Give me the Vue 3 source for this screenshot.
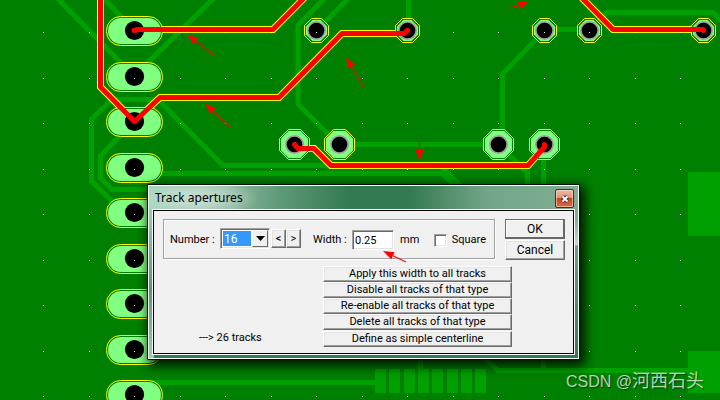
<script setup>
import { ref } from 'vue'

const aperture = ref('16')
const width = ref('0.25')
const square = ref(false)

const actions = [
  'Apply this width to all tracks',
  'Disable all tracks of that type',
  'Re-enable all tracks of that type',
  'Delete all tracks of that type',
  'Define as simple centerline',
]

const range = (n, start, step) => Array.from({ length: n }, (_, i) => Math.round(start + i * step))

const dots = range(15, 43, 45.5).flatMap((x) => range(9, 32, 45.5).map((y) => ({ x, y })))
const pills = range(9, 16, 45.5)
const fingers = [375, 389, 404, 418, 432, 447, 461, 475]

const octagon = (cx, cy, r) => {
  const k = Math.round(r * 0.42)
  return [[-k, -r], [k, -r], [r, -k], [r, k], [k, r], [-k, r], [-r, k], [-r, -k]]
    .map(([x, y]) => `${cx + x},${cy + y}`)
    .join(' ')
}
const pads = [
  ...[316.5, 407.5, 544.5, 589.5, 703.5].map((x) => ({ x, y: 30.5, r: 12 })),
  ...[294.5, 339.5, 498.5, 544.5].map((x) => ({ x, y: 144.5, r: 15 })),
]

const backTracks = [
  '57,-2 134,76',
  '103,-2 134,30',
  '214,-2 134,76',
  '300,165.5 223,165.5 158,99.5 112,99.5 91.5,119 91.5,181 116,205',
  '134,121 100.5,156 100.5,178 112,189.5 150,189.5',
  '300,165.5 440,165.5 465,190',
  '150,173.5 442,173.5 460,191',
  '325,-2 298,25 298,104 339,145',
  '349,-2 316,31',
  '408.5,-2 408.5,30',
  '339,144.5 498,144.5',
  '544,31 502.5,74 502.5,144',
  '544,29.5 589,29.5 607,12.5 713,12.5 724,23',
  '498,144 527.5,173 527.5,190',
  '543.5,144 543.5,190',
  '150,382.5 376,382.5',
  '420.5,355 420.5,370',
  '483,356 498,370.5 690,370.5',
  '543.5,355 543.5,370',
]

const tracks = [
  { points: '134,30.5 138,29.5 273,29.5 305,-3', halo: 7 },
  { points: '100.5,-5 100.5,87 134.5,121.5 160,97.5 279,97.5 342,33.5 404,33.5 407.5,30.5', halo: 7 },
  { points: '294.5,144.5 298,148.5 314,148.5 331,165.5 528,165.5 544.5,147 544.5,144.5', halo: 7 },
  { points: '581,-3 613,29.5 703,29.5 703.5,30.5', halo: 7 },
]

const arrow = (x1, y1, x2, y2) => {
  const len = Math.hypot(x2 - x1, y2 - y1)
  const ux = (x2 - x1) / len
  const uy = (y2 - y1) / len
  const bx = x2 - ux * 11
  const by = y2 - uy * 11
  return {
    line: `${x1},${y1} ${bx},${by}`,
    head: `${x2},${y2} ${bx - uy * 4},${by + ux * 4} ${bx + uy * 4},${by - ux * 4}`,
  }
}
const arrows = [
  arrow(214.5, 55.5, 187, 34.5),
  arrow(230.5, 127.5, 205, 103.5),
  arrow(363.5, 87.5, 346, 57),
  arrow(419.5, 137, 419.5, 161),
  arrow(509, 8.5, 529, 1.5),
]
const noteArrow = arrow(24, 12, 1, 1)
</script>

<template>
  <main class="workspace">
    <svg class="board" viewBox="0 0 720 400" preserveAspectRatio="xMinYMin slice" aria-hidden="true">
      <g class="back">
        <polyline v-for="p in backTracks" :key="p" :points="p" />
      </g>
      <g class="copper">
        <rect x="688" y="172" width="32" height="64" />
        <rect x="688" y="351" width="32" height="42" />
        <rect v-for="x in fingers" :key="x" :x="x" y="369" width="11" height="24" />
      </g>
      <g class="halo">
        <polyline v-for="t in tracks" :key="t.points" :points="t.points" :stroke-width="t.halo" />
      </g>
      <g v-for="y in pills" :key="y">
        <rect class="outline" x="106.5" :y="y + 0.5" width="56" height="29" rx="14" />
        <rect class="pad" x="108" :y="y + 2" width="53" height="26" rx="13" />
        <circle cx="134.5" :cy="y + 14.5" r="9.6" />
      </g>
      <g v-for="p in pads" :key="`${p.x}-${p.y}`">
        <polygon class="outline" :points="octagon(p.x, p.y, p.r)" />
        <polygon class="pad" :points="octagon(p.x, p.y, p.r - 1.5)" />
        <circle class="ring" :cx="p.x" :cy="p.y" r="9.5" />
        <circle :cx="p.x" :cy="p.y" r="7.8" />
      </g>
      <g class="dots">
        <rect v-for="d in dots" :key="`${d.x}-${d.y}`" :x="d.x" :y="d.y" width="1" height="1" />
      </g>
      <g class="front">
        <polyline v-for="t in tracks" :key="t.points" :points="t.points" />
      </g>
      <g v-for="a in arrows" :key="a.line" class="arrow">
        <polyline :points="a.line" />
        <polygon :points="a.head" />
      </g>
    </svg>

    <section class="window" role="dialog" aria-labelledby="dialog-title">
      <div class="frame">
        <header class="titlebar">
          <h1 id="dialog-title">Track apertures</h1>
          <button class="close" type="button" aria-label="Close">
            <svg viewBox="0 0 10 10" width="10" height="10" aria-hidden="true">
              <path d="M2.5 2.5L7.5 7.5M7.5 2.5L2.5 7.5" stroke="#3b3f4c" stroke-width="4" />
              <path d="M2.5 2.5L7.5 7.5M7.5 2.5L2.5 7.5" stroke="#fff" stroke-width="1.8" />
            </svg>
          </button>
        </header>
        <form class="content" @submit.prevent>
          <div class="top">
            <div class="group">
              <label class="number-label" for="aperture">Number :</label>
              <div class="combo">
                <select id="aperture" v-model="aperture">
                  <option>15</option>
                  <option>16</option>
                  <option>17</option>
                </select>
                <span class="drop">
                  <svg viewBox="0 0 9 5" width="9" height="5" aria-hidden="true"><path d="M0 0H9L4.5 5Z" /></svg>
                </span>
              </div>
              <div class="steps">
                <button class="button step" type="button">&lt;</button>
                <button class="button step" type="button">&gt;</button>
              </div>
              <label class="width-label" for="width">Width :</label>
              <div class="field">
                <input id="width" v-model="width" type="text" />
                <svg class="note-arrow arrow" viewBox="0 0 26 14" width="26" height="14" aria-hidden="true">
                  <polyline :points="noteArrow.line" />
                  <polygon :points="noteArrow.head" />
                </svg>
              </div>
              <span class="unit">mm</span>
              <label class="square"><input v-model="square" type="checkbox" />Square</label>
            </div>
            <div class="confirm">
              <button class="button main default" type="submit">OK</button>
              <button class="button main" type="button">Cancel</button>
            </div>
          </div>
          <div class="bottom">
            <p class="summary">---&gt; 26 tracks</p>
            <div class="actions">
              <button v-for="a in actions" :key="a" class="button action" type="button">{{ a }}</button>
            </div>
          </div>
        </form>
      </div>
    </section>

    <p class="watermark">CSDN @<span>河西石头</span></p>
  </main>
</template>

<style>
body {
  background: #008000;
}
</style>

<style scoped>
.workspace {
  position: relative;
  min-height: 100vh;
  overflow: hidden;
  background: #008000;
  color: #000;
  font: 11px/14px Roboto, "Liberation Sans", sans-serif;
}
.board {
  position: absolute;
  inset: 0;
  width: 100%;
  height: 100%;
}
.back polyline {
  fill: none;
  stroke: #00a000;
  stroke-width: 5;
}
.copper {
  fill: #00a000;
}
.halo polyline {
  fill: none;
  stroke: #ff0;
}
.front polyline {
  fill: none;
  stroke: #f00;
  stroke-width: 5;
  stroke-linecap: round;
  stroke-linejoin: round;
}
.outline {
  fill: #008000;
  stroke: #ff0;
}
.pad {
  fill: #80ff80;
}
.ring {
  fill: #a0a0a0;
}
.dots {
  fill: #fff;
}
.arrow polyline {
  fill: none;
  stroke: #e81000;
  stroke-width: 1.2;
}
.arrow polygon {
  fill: #f00;
}

.window {
  position: absolute;
  left: 147px;
  top: 184px;
  width: 433px;
  box-sizing: border-box;
  border: 1px solid #06140c;
  border-radius: 1px;
  box-shadow: 3px 4px 12px 2px rgba(0, 0, 0, 0.85);
}
.frame {
  border: 1px solid #fff;
  padding: 0 3px 3px;
  background:
    radial-gradient(ellipse 62px 20px at 48px 12px, rgba(222, 234, 226, 0.6) 30%, rgba(222, 234, 226, 0) 100%) no-repeat,
    linear-gradient(90deg, #a2d4bc 0, #8cb8a0 80px, #5e9a78 130px, #347a50 200px, #347a50 260px, #73a689 340px, #7fae93 100%) 0 0 / 100% 24px no-repeat,
    linear-gradient(180deg, #a9dccb 0, #5b9577 60%, #8bd4b4 100%) 0 0 / 5px 100% no-repeat,
    linear-gradient(180deg, #7fae93 20%, #c4dccd 34%, #6b9f82 35%, #2f7a50 100%) 100% 0 / 5px 100% no-repeat,
    #307c52;
}
.titlebar {
  display: flex;
  align-items: center;
  justify-content: space-between;
  height: 23px;
  padding: 0 1px 0 3px;
}
h1 {
  margin: 0;
  font: 12px/16px "Noto Sans", "Open Sans", sans-serif;
}
.close {
  display: grid;
  place-items: center;
  width: 19px;
  height: 19px;
  margin-top: 2px;
  padding: 0;
  border: 1px solid #4c2a24;
  border-radius: 2px;
  background: linear-gradient(#f3b9a8 0, #e08e78 48%, #c4421f 50%, #da6e48 100%);
  box-shadow: inset 0 0 0 1px rgba(255, 220, 205, 0.6);
}
.content {
  border: 1px solid #000;
  outline: 1px solid #fff;
  margin: 1px;
  padding: 8px 8px 6px 9px;
  background: #f0f0f0;
}
.top {
  display: flex;
  gap: 10px;
}
.group {
  display: flex;
  flex: 1;
  align-items: center;
  box-sizing: border-box;
  height: 40px;
  padding: 2px 8px 0 6px;
  border: 1px solid #a0a0a0;
  box-shadow: 1px 1px 0 #fff, inset 1px 1px 0 #fff;
  white-space: nowrap;
}
.number-label {
  width: 50px;
}
.combo {
  position: relative;
  margin-top: -3px;
}
select {
  display: block;
  width: 50px;
  height: 21px;
  padding: 0 0 0 3px;
  appearance: none;
  border: 1px solid;
  border-color: #a0a0a0 #fff #fff #a0a0a0;
  border-radius: 0;
  box-shadow: inset 1px 1px 0 #696969, inset -1px -1px 0 #e3e3e3;
  background: linear-gradient(#39f, #39f) 2px 2px / 28px 15px no-repeat #fff;
  color: #fff;
  font: inherit;
  font-size: 12px;
}
.drop {
  position: absolute;
  top: 2px;
  right: 2px;
  display: grid;
  place-items: center;
  box-sizing: border-box;
  width: 16px;
  height: 17px;
  border: 1px solid;
  border-color: #fff #696969 #696969 #fff;
  background: #f0f0f0;
  pointer-events: none;
}
.steps {
  display: flex;
  margin: -3px 12px 0 1px;
}
.button {
  box-sizing: border-box;
  padding: 0;
  border: 1px solid;
  border-color: #fff #696969 #696969 #fff;
  border-radius: 0;
  box-shadow: inset -1px -1px 0 #a0a0a0, inset 1px 1px 0 #e3e3e3;
  background: #f0f0f0;
  color: #000;
  font: inherit;
  text-align: center;
}
.step {
  width: 15px;
  height: 19px;
}
.width-label {
  width: 39px;
}
.field {
  position: relative;
}
.field input {
  display: block;
  box-sizing: border-box;
  width: 42px;
  height: 20px;
  padding: 0 0 0 2px;
  border: 1px solid;
  border-color: #a0a0a0 #fff #fff #a0a0a0;
  box-shadow: inset 1px 1px 0 #696969, inset -1px -1px 0 #e3e3e3;
  background: #fff;
  color: #000;
  font: inherit;
}
.note-arrow {
  position: absolute;
  left: 30px;
  top: 20px;
}
.unit {
  flex: 1;
  padding-left: 6px;
}
.square {
  display: flex;
  align-items: center;
  gap: 5px;
}
.square input {
  width: 13px;
  height: 13px;
  margin: 0;
  appearance: none;
  border: 1px solid;
  border-color: #a0a0a0 #fff #fff #a0a0a0;
  box-shadow: inset 1px 1px 0 #696969, inset -1px -1px 0 #e3e3e3;
  background: #fff;
}
.confirm {
  display: grid;
  gap: 1px;
}
.main {
  width: 60px;
  height: 20px;
  font-size: 12px;
}
.default {
  border-color: #696969;
  box-shadow: inset -1px -1px 0 #696969, inset 1px 1px 0 #fff;
}
.bottom {
  display: flex;
  align-items: flex-end;
  justify-content: space-between;
  padding: 6px 53px 0 36px;
}
.summary {
  margin: 0;
  padding-bottom: 2px;
}
.actions {
  display: grid;
  width: 189px;
}
.action {
  height: 16px;
  line-height: 14px;
}
.action:last-child {
  margin-top: 1px;
}
.watermark {
  position: absolute;
  right: 16px;
  bottom: 6px;
  margin: 0;
  color: rgba(255, 255, 255, 0.72);
  font: 16px/24px "Liberation Sans", "Noto Sans CJK SC", sans-serif;
  text-shadow: 1px 1px 1px rgba(0, 0, 0, 0.5);
}
.watermark span {
  font-size: 18px;
}
</style>
